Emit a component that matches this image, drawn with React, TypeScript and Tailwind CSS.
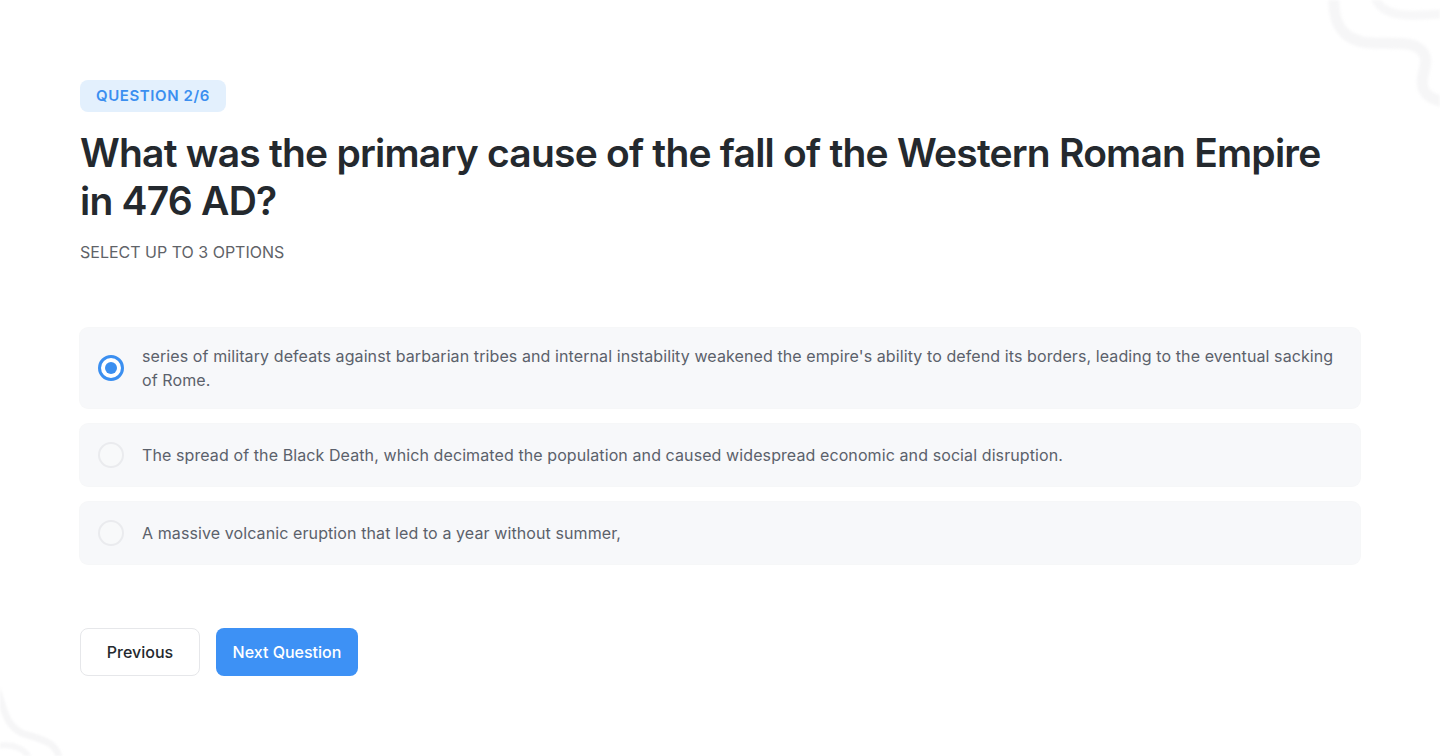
import * as React from "react";

type Option = {
  readonly id: string;
  readonly label: string;
};

const options: readonly Option[] = [
  {
    id: "a",
    label:
      "series of military defeats against barbarian tribes and internal instability weakened the empire's ability to defend its borders, leading to the eventual sacking of Rome.",
  },
  {
    id: "b",
    label:
      "The spread of the Black Death, which decimated the population and caused widespread economic and social disruption.",
  },
  {
    id: "c",
    label: "A massive volcanic eruption that led to a year without summer,",
  },
];

const Radio = ({ checked }: { readonly checked: boolean }) => (
  <span className="grid size-[30px] shrink-0 place-items-center">
    {checked ? (
      <span className="grid size-[26px] place-items-center rounded-full border-[3px] border-[#3b8ff0] bg-white">
        <span className="size-[12px] rounded-full bg-[#3b8ff0]" />
      </span>
    ) : (
      <span className="size-[26px] rounded-full border-2 border-[#eaebee] bg-[#f8f9fa]" />
    )}
  </span>
);

// faint decorative strokes in the corners
const Swirls = () => (
  <>
    <svg
      aria-hidden
      className="pointer-events-none absolute right-0 top-0 h-[130px] w-[130px] blur-[1.5px]"
      viewBox="0 0 130 130"
      fill="none"
    >
      <path
        d="M24 -5 C22 25 34 42 62 43 C86 44 106 40 114 54 C120 64 108 78 114 90 C118 98 126 100 134 102"
        stroke="#f6f6f7"
        strokeWidth="11"
        strokeLinecap="round"
      />
      <path
        d="M64 -5 C68 8 78 14 96 15 C112 16 124 14 134 14"
        stroke="#f7f7f8"
        strokeWidth="9"
        strokeLinecap="round"
      />
    </svg>
    <svg
      aria-hidden
      className="pointer-events-none absolute bottom-0 left-0 h-[110px] w-[90px] blur-[1px]"
      viewBox="0 0 90 110"
      fill="none"
    >
      <path
        d="M-4 40 C4 60 4 80 24 88 C44 94 56 96 60 114"
        stroke="#f6f6f7"
        strokeWidth="7"
        strokeLinecap="round"
      />
      <path
        d="M-4 100 C10 98 24 100 30 114"
        stroke="#f7f7f8"
        strokeWidth="6"
        strokeLinecap="round"
      />
    </svg>
  </>
);

export default function App() {
  const [selected, setSelected] = React.useState<readonly string[]>(["a"]);

  const toggle = (id: string) => {
    setSelected((current) =>
      current.includes(id)
        ? current.filter((value) => value !== id)
        : current.length >= 3
          ? current
          : [...current, id],
    );
  };

  return (
    <div
      className="relative h-[756px] w-full overflow-hidden bg-white"
      style={{ fontFamily: "Inter, 'Noto Sans', sans-serif" }}
    >
      <Swirls />
      <main className="relative flex flex-col px-20 pt-20">
        <span className="inline-flex h-8 w-fit items-center rounded-lg bg-[#e3f0fd] px-4 text-[15px] font-semibold tracking-[0.04em] text-[#3b8ff0]">
          QUESTION 2/6
        </span>

        <h1 className="mt-[17px] max-w-[1280px] text-[39px] font-semibold leading-[48px] tracking-[-0.02em] text-[#24292e]">
          What was the primary cause of the fall of the Western Roman Empire in 476 AD?
        </h1>

        <p className="mt-[15px] text-[16px] leading-6 text-[#5f6368]">SELECT UP TO 3 OPTIONS</p>

        <ul className="mt-[64px] flex w-[1280px] flex-col gap-4">
          {options.map((option) => {
            const checked = selected.includes(option.id);
            return (
              <li key={option.id}>
                <button
                  className="flex w-full items-center gap-4 rounded-lg bg-[#f7f8fa] py-4 pl-4 pr-6 text-left shadow-[0_0_0_1px_rgba(240,241,243,0.6)]"
                  onClick={() => toggle(option.id)}
                  type="button"
                >
                  <Radio checked={checked} />
                  <span className="text-[16px] leading-6 tracking-[0.006em] text-[#5b616b]">
                    {option.label}
                  </span>
                </button>
              </li>
            );
          })}
        </ul>

        <div className="mt-[64px] flex items-center gap-4">
          <button
            className="h-12 w-[120px] rounded-lg border border-[#e6e7ea] bg-white text-[16px] font-medium text-[#24292e]"
            type="button"
          >
            Previous
          </button>
          <button
            className="h-12 w-[142px] rounded-lg bg-[#3d91f5] text-[16px] font-medium text-white"
            type="button"
          >
            Next Question
          </button>
        </div>
      </main>
    </div>
  );
}
